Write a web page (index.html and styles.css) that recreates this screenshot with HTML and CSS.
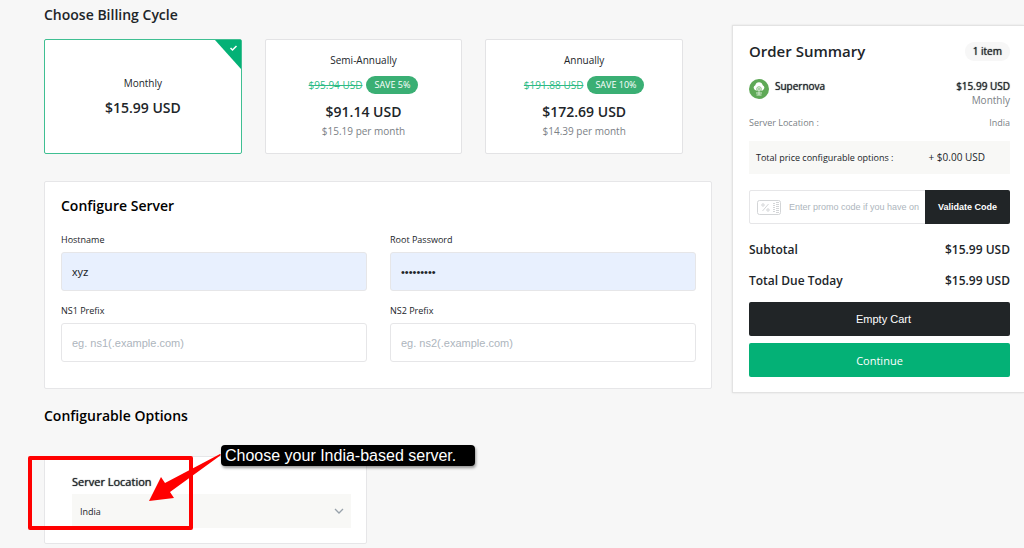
FILE: index.html
```html
<!DOCTYPE html>
<html lang="en">
<head>
  <meta charset="utf-8">
  <meta name="viewport" content="width=device-width, initial-scale=1">
  <title>Configure Server</title>
  <link rel="stylesheet" href="styles.css">
</head>
<body>
  <div class="page">
    <main class="main">
      <h2 class="title title-soft">Choose Billing Cycle</h2>
      <div class="cycles">
        <label class="cycle">
          <input type="radio" name="cycle" value="monthly" checked>
          <span class="cycle-name">Monthly</span>
          <strong class="cycle-price">$15.99 USD</strong>
          <svg class="cycle-check" viewBox="0 0 26 29" aria-hidden="true">
            <path d="M0 0H26V29Z" fill="#04b176"/>
            <path d="M15.500 8l2 2 4-4" fill="none" stroke="#fff" stroke-width="1.500"/>
          </svg>
        </label>
        <label class="cycle">
          <input type="radio" name="cycle" value="semi">
          <span class="cycle-name">Semi-Annually</span>
          <span class="cycle-save"><s>$95.94 USD</s><span class="pill">SAVE 5%</span></span>
          <strong class="cycle-price">$91.14 USD</strong>
          <span class="cycle-month">$15.19 per month</span>
        </label>
        <label class="cycle">
          <input type="radio" name="cycle" value="annual">
          <span class="cycle-name">Annually</span>
          <span class="cycle-save"><s>$191.88 USD</s><span class="pill">SAVE 10%</span></span>
          <strong class="cycle-price">$172.69 USD</strong>
          <span class="cycle-month">$14.39 per month</span>
        </label>
      </div>

      <section class="card configure">
        <h2 class="title">Configure Server</h2>
        <form class="fields">
          <div class="field">
            <label for="hostname">Hostname</label>
            <input class="filled" type="text" id="hostname" value="xyz">
          </div>
          <div class="field">
            <label for="password">Root Password</label>
            <input class="filled" type="password" id="password" value="abcdefghi">
          </div>
          <div class="field">
            <label for="ns1">NS1 Prefix</label>
            <input type="text" id="ns1" placeholder="eg. ns1(.example.com)">
          </div>
          <div class="field">
            <label for="ns2">NS2 Prefix</label>
            <input type="text" id="ns2" placeholder="eg. ns2(.example.com)">
          </div>
        </form>
      </section>

      <h2 class="title">Configurable Options</h2>
      <section class="card options">
        <label for="location">Server Location</label>
        <div class="select">
          <select id="location">
            <option>India</option>
          </select>
          <svg width="10" height="6" viewBox="0 0 10 6" aria-hidden="true">
            <path d="M1 1l4 4 4-4" fill="none" stroke="#98a2ab" stroke-width="1.300"/>
          </svg>
        </div>
        <!-- callout -->
        <div class="frame"></div>
        <svg class="arrow" viewBox="0 0 72 49" aria-hidden="true">
          <path d="M71 1L16 30 12 24 0 48 25 45 21 39 72 2Z" fill="#f00"/>
        </svg>
        <div class="note">Choose your India-based server.</div>
      </section>
    </main>

    <aside class="summary">
      <div class="row summary-head">
        <h2>Order Summary</h2>
        <span class="count">1 item</span>
      </div>
      <div class="row product">
        <svg width="20" height="20" viewBox="0 0 20 20" aria-hidden="true">
          <circle cx="10" cy="10" r="10" fill="#5fa957"/>
          <path d="M7 11.500A2.800 2.800 0 0 1 6.300 6.200A3.800 3.800 0 0 1 13.700 6.200A2.800 2.800 0 0 1 13 11.500Z" fill="#fff"/>
          <circle cx="10" cy="10" r="2.300" fill="#e6f2e4" stroke="#8cc286"/>
          <circle cx="10" cy="10" r=".8" fill="#5fa957"/>
          <path d="M10 12.500V16M7 14h6M7.500 16h5" stroke="#d5ead2" stroke-width="1"/>
        </svg>
        <strong class="product-name">Supernova</strong>
        <div class="product-price"><strong>$15.99 USD</strong><span>Monthly</span></div>
      </div>
      <div class="row detail"><span>Server Location :</span><span>India</span></div>
      <div class="row extra"><span>Total price configurable options :</span><span class="extra-price">+ $0.00 USD</span></div>
      <form class="promo">
        <svg width="24" height="15" viewBox="0 0 24 15" fill="none" stroke="#d3d5d7" aria-hidden="true">
          <rect x=".5" y=".5" width="23" height="14" rx="2"/>
          <path d="M11.500 4l-6 7"/>
          <circle cx="6" cy="5" r="1.200"/>
          <circle cx="11" cy="10" r="1.200"/>
          <path d="M16 3.500h2M16 5.500h2M16 7.500h2M16 9.500h2M16 11.500h2M19 2.500h3M19 4.500h3M19 6.500h3M19 8.500h3M19 10.500h3M19 12.500h3"/>
        </svg>
        <input type="text" placeholder="Enter promo code if you have one" aria-label="Promo code">
        <button type="button">Validate Code</button>
      </form>
      <div class="row total"><span>Subtotal</span><span>$15.99 USD</span></div>
      <div class="row total"><span>Total Due Today</span><span>$15.99 USD</span></div>
      <button type="button" class="btn btn-dark">Empty Cart</button>
      <button type="button" class="btn btn-green">Continue</button>
    </aside>
  </div>
</body>
</html>
```
FILE: styles.css
```css
* {
  box-sizing: border-box;
}
body {
  margin: 0;
  background: #f7f7f7;
  color: #212529;
  font-family: "Open Sans", sans-serif;
  font-size: 10px;
}
h2 {
  margin: 0;
}
h2, .cycle-price, .total {
  font-weight: 600;
}
/* small labels: regular weight, thickened */
.product strong, .count, .options label {
  font-weight: 400;
  text-shadow: 0 0 1px currentColor;
}
button, input, select {
  font-family: "Liberation Sans", Arial, sans-serif;
}
.page {
  display: flex;
  align-items: flex-start;
  gap: 20px;
  padding-left: 44px;
}
.main {
  flex: 1;
  min-width: 0;
  padding-top: 3px;
}
.title {
  font-size: 14px;
  line-height: 24px;
  color: #000;
}
.title-soft {
  color: #212529;
}
.card {
  background: #fff;
  border: 1px solid #e6e6e8;
  border-radius: 2px;
}

/* billing cycle */
.cycles {
  display: grid;
  grid-template-columns: repeat(3, 1fr);
  gap: 23px;
  margin: 12px 29px 27px 0;
}
.cycle {
  position: relative;
  display: flex;
  flex-direction: column;
  align-items: center;
  justify-content: center;
  min-height: 115px;
  padding-bottom: 2px;
  background: #fff;
  border: 1px solid #e3e3e5;
  border-radius: 2px;
  cursor: pointer;
}
.cycle:has(input:checked) {
  padding-bottom: 0;
  border-color: #3fbf92;
}
.cycle input {
  position: absolute;
  opacity: 0;
}
.cycle-check {
  position: absolute;
  top: 0;
  right: 0;
  width: 26px;
  height: 29px;
}
.cycle-name {
  line-height: 18px;
}
.cycle-save {
  display: flex;
  align-items: center;
  gap: 4px;
  margin: 7px 0 2px;
}
.cycle-save s {
  color: #2dbb85;
}
.pill {
  padding: 0 8px;
  border-radius: 9px;
  background: #3aaf74;
  color: #fff;
  font-size: 9px;
  line-height: 18px;
}
.cycle-price {
  margin-top: 5px;
  font-size: 14px;
  line-height: 22px;
}
.cycle-month {
  color: #7b8186;
  line-height: 17px;
}

/* configure server */
.configure {
  margin-bottom: 15px;
  padding: 12px 15px 26px 16px;
}
.fields {
  display: grid;
  grid-template-columns: 1fr 1fr;
  gap: 12px 23px;
  margin-top: 14px;
}
.field label {
  display: block;
  margin-bottom: 4px;
  font-size: 9px;
  line-height: 16px;
}
.field input {
  display: block;
  width: 100%;
  height: 39px;
  padding: 0 10px;
  border: 1px solid #e6e6e8;
  border-radius: 3px;
  background: #fff;
  color: #212529;
  font-size: 11px;
}
.field .filled {
  background: #e8f0fe;
}
input::placeholder {
  color: #adb5bd;
  opacity: 1;
}

/* configurable options */
.options {
  position: relative;
  width: 323px;
  margin-top: 28px;
  padding: 16px 15px 15px 27px;
}
.options label {
  display: block;
  margin-bottom: 4px;
  font-size: 11px;
  line-height: 17px;
}
.select {
  display: flex;
  align-items: center;
  padding-right: 7px;
  background: #f8f8f6;
}
.select select {
  flex: 1;
  height: 34px;
  padding: 0 8px;
  border: 0;
  background: none;
  appearance: none;
  color: #212529;
  font-family: "Open Sans", sans-serif;
  font-size: 9px;
}
.frame {
  position: absolute;
  left: -17px;
  top: -1px;
  width: 165px;
  height: 74px;
  border: 4px solid #f00;
  border-radius: 2px;
}
.arrow {
  position: absolute;
  left: 104px;
  top: -4px;
  width: 72px;
  height: 49px;
}
.note {
  position: absolute;
  left: 176px;
  top: -12px;
  padding: 0 19px 0 4px;
  border-radius: 4px;
  background: #000;
  color: #fff;
  font-family: "Liberation Sans", Arial, sans-serif;
  font-size: 16px;
  line-height: 21px;
  white-space: nowrap;
  box-shadow: 1px 2px 3px rgba(0, 0, 0, 0.4);
}

/* order summary */
.summary {
  flex: 0 0 292px;
  margin-top: 25px;
  padding: 15px 14px 15px 16px;
  background: #fff;
  border: 1px solid #e3e3e3;
  border-right: 0;
  box-shadow: 0 0 2px rgba(0, 0, 0, 0.1);
}
.row {
  display: flex;
  justify-content: space-between;
}
.summary-head {
  align-items: center;
}
.summary-head h2 {
  font-size: 15px;
  line-height: 20px;
}
.count {
  padding: 0 8px;
  border-radius: 9px;
  background: #f7f7f7;
  line-height: 19px;
}
.product {
  margin-top: 18px;
}
.product strong {
  line-height: 15px;
}
.product-name {
  flex: 1;
  margin-left: 6px;
}
.product-price {
  display: flex;
  flex-direction: column;
  align-items: flex-end;
  color: #7b8186;
  line-height: 13px;
}
.product-price strong {
  color: #212529;
}
.detail {
  margin: 8px 0 10px;
  color: #7b8186;
  font-size: 9px;
  line-height: 16px;
}
.extra {
  padding: 0 25px 0 7px;
  background: #f8f8f6;
  font-size: 9px;
  line-height: 33px;
}
.extra-price {
  font-size: 10px;
}
.promo {
  display: flex;
  align-items: center;
  margin: 16px 0;
  padding-left: 7px;
  border: 1px solid #e6e6e8;
  border-radius: 2px;
}
.promo input {
  flex: 1;
  min-width: 0;
  margin: 0 7px 0 8px;
  padding: 0;
  border: 0;
  font-size: 9px;
}
.promo button {
  height: 34px;
  margin: -1px;
  padding: 0 13px;
  border: 0;
  border-radius: 0 2px 2px 0;
  background: #212527;
  color: #fff;
  font-size: 9px;
  font-weight: 700;
}
.total {
  margin-bottom: 11px;
  font-size: 12px;
  line-height: 20px;
}
.btn {
  display: block;
  width: 100%;
  height: 34px;
  margin-top: 7px;
  border: 0;
  border-radius: 2px;
  color: #fff;
  font-size: 11px;
}
.btn-dark {
  padding-left: 14px;
  background: #212527;
}
.btn-green {
  background: #04b176;
  font-family: "Open Sans", sans-serif;
}
```
